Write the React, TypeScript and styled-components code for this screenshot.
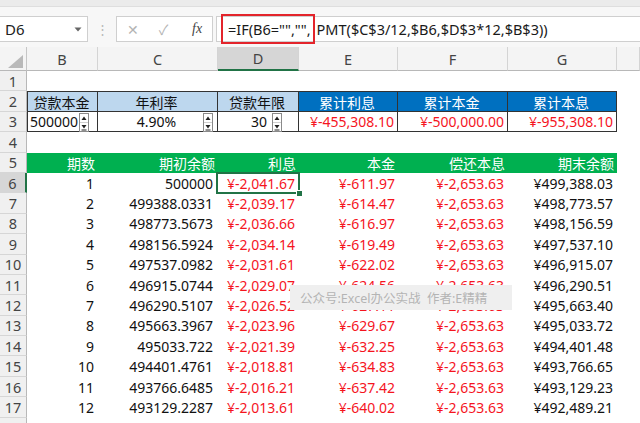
import React from "react";
import styled, { createGlobalStyle, css } from "styled-components";

const GlobalStyle = createGlobalStyle`
  html, body { margin: 0; padding: 0; background: #fff; }
  body { font-family: "Noto Sans", "Noto Sans CJK SC", sans-serif; }
`;

const ROW_H = 20.4;
const COLS = "27px 71px 120px 81px 99px 110px 109px 1fr";
const RED = "#f5141e";
const GREEN = "#00b050";
const BLUE = "#0070c0";
const PALE = "#bdd7ee";
const LINE = "#333";

type Align = "left" | "center" | "right";

const Window = styled.div`
  width: 640px;
  height: 423px;
  overflow: hidden;
  display: flex;
  flex-direction: column;
  background: #fff;
`;

const RibbonEdge = styled.div`
  height: 6px;
  flex-shrink: 0;
  background: #ebebeb;
  border-bottom: 1px solid #dedede;
`;

const FormulaBar = styled.div`
  height: 40px;
  flex-shrink: 0;
  box-sizing: border-box;
  padding: 9px 0 5px 0;
  display: flex;
  align-items: stretch;
  background: #f7f7f7;
`;

const NameBox = styled.div`
  width: 88px;
  box-sizing: border-box;
  background: #fff;
  border: 1px solid #cfcfcf;
  border-left: none;
  display: flex;
  align-items: center;
  justify-content: space-between;
  padding: 0 5px 0 5px;
  font-size: 15px;
  color: #222;
`;

const Grip = styled.div`
  width: 28px;
  display: flex;
  align-items: center;
  justify-content: center;
  color: #b8b8b8;
  font-size: 13px;
`;

const FxBox = styled.div`
  width: 97px;
  box-sizing: border-box;
  background: #fff;
  border: 1px solid #cfcfcf;
  display: flex;
  align-items: center;
  padding-left: 4px;
`;

const FxIcon = styled.span<{ $w: number; $italic?: boolean; $dark?: boolean }>`
  width: ${(p) => p.$w}px;
  display: flex;
  justify-content: center;
  color: ${(p) => (p.$dark ? "#444" : "#b4b4b4")};
  font-size: 14px;
  ${(p) =>
    p.$italic &&
    css`
      font-family: "Liberation Serif", serif;
      font-style: italic;
    `}
`;

const FormulaInput = styled.div`
  flex: 1;
  margin-left: 3px;
  box-sizing: border-box;
  background: #fff;
  border: 1px solid #cfcfcf;
  border-right: none;
  display: flex;
  align-items: center;
  padding-left: 4px;
  font-size: 14.5px;
  color: #1a1a1a;
  white-space: nowrap;
`;

const Highlight = styled.span`
  height: 30px;
  box-sizing: border-box;
  border: 2px solid #e3242b;
  display: inline-flex;
  align-items: center;
  padding: 0 2px 0 5px;
  margin-right: 2px;
`;

const Sheet = styled.div`
  position: relative;
  flex: 1;
  display: grid;
  grid-template-columns: ${COLS};
  grid-template-rows: 24px repeat(18, ${ROW_H}px);
  font-size: 14px;
  color: #111;
`;

const Corner = styled.div`
  background: #f4f4f4;
  border-right: 1px solid #c6c6c6;
  border-bottom: 1px solid #b8b8b8;
  display: flex;
  align-items: flex-end;
  justify-content: flex-end;
  padding: 0 3px 2px 0;
`;

const ColHead = styled.div<{ $active?: boolean }>`
  box-sizing: border-box;
  background: ${(p) => (p.$active ? "#d6d6d6" : "#f4f4f4")};
  border-right: 1px solid #d4d4d4;
  border-bottom: ${(p) => (p.$active ? "2px solid #217346" : "1px solid #b8b8b8")};
  display: flex;
  align-items: center;
  justify-content: center;
  color: #444;
  font-size: 14.5px;
`;

const RowHead = styled.div<{ $active?: boolean }>`
  box-sizing: border-box;
  background: ${(p) => (p.$active ? "#d6d6d6" : "#f0f0f0")};
  border-right: ${(p) => (p.$active ? "2px solid #217346" : "1px solid #b8b8b8")};
  border-bottom: 1px solid #d6d6d6;
  display: flex;
  align-items: center;
  justify-content: center;
  color: #444;
  font-size: 14.5px;
`;

const Cell = styled.div<{
  $align?: Align;
  $bg?: string;
  $color?: string;
  $boxed?: boolean;
  $top?: boolean;
  $left?: boolean;
  $pad?: number;
  $selected?: boolean;
}>`
  position: relative;
  box-sizing: border-box;
  display: flex;
  align-items: center;
  white-space: nowrap;
  justify-content: ${(p) =>
    p.$align === "left" ? "flex-start" : p.$align === "center" ? "center" : "flex-end"};
  padding: 0 ${(p) => p.$pad ?? 4}px 0 2px;
  background: ${(p) => p.$bg ?? "transparent"};
  color: ${(p) => p.$color ?? "#111"};
  ${(p) =>
    p.$boxed &&
    css`
      border-right: 1px solid ${LINE};
      border-bottom: 1px solid ${LINE};
    `}
  ${(p) => p.$top && css`border-top: 1px solid ${LINE};`}
  ${(p) => p.$left && css`border-left: 1px solid ${LINE};`}
  ${(p) =>
    p.$selected &&
    css`
      z-index: 2;
      &::before {
        content: "";
        position: absolute;
        inset: -1px -1px -1px -2px;
        border: 2px solid #217346;
      }
      &::after {
        content: "";
        position: absolute;
        right: -4px;
        bottom: -4px;
        width: 5px;
        height: 5px;
        background: #217346;
        border: 1px solid #fff;
      }
    `}
`;

const SpinBox = styled.span<{ $right: number }>`
  position: absolute;
  right: ${(p) => p.$right}px;
  top: 1px;
  display: flex;
`;

const Watermark = styled.div`
  position: absolute;
  left: 290px;
  top: 238px;
  width: 222px;
  height: 25px;
  box-sizing: border-box;
  padding-left: 10px;
  background: #efefef;
  color: #b4b4b4;
  font-size: 12.5px;
  display: flex;
  align-items: center;
  white-space: pre;
  z-index: 3;
`;

function Spinner({ right }: { right: number }) {
  return (
    <SpinBox $right={right}>
      <svg width="10" height="19" viewBox="0 0 10 19">
        <rect x="0.5" y="0.5" width="9" height="18" fill="#fff" stroke="#8a8a8a" />
        <line x1="1" y1="9.5" x2="9" y2="9.5" stroke="#d0d0d0" />
        <path d="M5 3.5 L7.5 7 H2.5Z" fill="#222" />
        <path d="M2.5 12 H7.5 L5 15.5Z" fill="#222" />
        <line x1="2.5" y1="17" x2="7.5" y2="17" stroke="#222" />
      </svg>
    </SpinBox>
  );
}

const letters = ["B", "C", "D", "E", "F", "G", ""];

const schedule: [number, string, string, string, string, string][] = [
  [1, "500000", "¥-2,041.67", "¥-611.97", "¥-2,653.63", "¥499,388.03"],
  [2, "499388.0331", "¥-2,039.17", "¥-614.47", "¥-2,653.63", "¥498,773.57"],
  [3, "498773.5673", "¥-2,036.66", "¥-616.97", "¥-2,653.63", "¥498,156.59"],
  [4, "498156.5924", "¥-2,034.14", "¥-619.49", "¥-2,653.63", "¥497,537.10"],
  [5, "497537.0982", "¥-2,031.61", "¥-622.02", "¥-2,653.63", "¥496,915.07"],
  [6, "496915.0744", "¥-2,029.07", "¥-624.56", "¥-2,653.63", "¥496,290.51"],
  [7, "496290.5107", "¥-2,026.52", "¥-627.11", "¥-2,653.63", "¥495,663.40"],
  [8, "495663.3967", "¥-2,023.96", "¥-629.67", "¥-2,653.63", "¥495,033.72"],
  [9, "495033.722", "¥-2,021.39", "¥-632.25", "¥-2,653.63", "¥494,401.48"],
  [10, "494401.4761", "¥-2,018.81", "¥-634.83", "¥-2,653.63", "¥493,766.65"],
  [11, "493766.6485", "¥-2,016.21", "¥-637.42", "¥-2,653.63", "¥493,129.23"],
  [12, "493129.2287", "¥-2,013.61", "¥-640.02", "¥-2,653.63", "¥492,489.21"],
];

const EmptyRow = ({ n }: { n: number }) => (
  <>
    <RowHead>{n}</RowHead>
    {letters.map((l, i) => (
      <Cell key={i} />
    ))}
  </>
);

export default function App() {
  return (
    <Window>
      <GlobalStyle />
      <RibbonEdge />
      <FormulaBar>
        <NameBox>
          <span>D6</span>
          <svg width="8" height="5" viewBox="0 0 8 5">
            <path d="M0.5 0.5 H7.5 L4 4.5Z" fill="#666" />
          </svg>
        </NameBox>
        <Grip>⋮</Grip>
        <FxBox>
          <FxIcon $w={24}>✕</FxIcon>
          <FxIcon $w={38}>✓</FxIcon>
          <FxIcon $w={30} $italic $dark>
            fx
          </FxIcon>
        </FxBox>
        <FormulaInput>
          <Highlight>=IF(B6="","",</Highlight>
          PMT($C$3/12,$B6,$D$3*12,$B$3))
        </FormulaInput>
      </FormulaBar>

      <Sheet>
        <Corner>
          <svg width="15" height="13" viewBox="0 0 15 13">
            <path d="M15 0 V13 H0Z" fill="#b9b9b9" />
          </svg>
        </Corner>
        {letters.map((l, i) => (
          <ColHead key={i} $active={l === "D"}>
            {l}
          </ColHead>
        ))}

        <EmptyRow n={1} />

        <RowHead>2</RowHead>
        <Cell $align="center" $bg={PALE} $boxed $top $left>贷款本金</Cell>
        <Cell $align="center" $bg={PALE} $boxed $top>年利率</Cell>
        <Cell $align="center" $bg={PALE} $boxed $top>贷款年限</Cell>
        <Cell $align="center" $bg={BLUE} $color="#fff" $boxed $top>累计利息</Cell>
        <Cell $align="center" $bg={BLUE} $color="#fff" $boxed $top>累计本金</Cell>
        <Cell $align="center" $bg={BLUE} $color="#fff" $boxed $top>累计本息</Cell>
        <Cell />

        <RowHead>3</RowHead>
        <Cell $align="left" $boxed $left>
          500000
          <Spinner right={8} />
        </Cell>
        <Cell $align="center" $boxed>
          4.90%
          <Spinner right={4} />
        </Cell>
        <Cell $boxed $pad={31}>
          30
          <Spinner right={16} />
        </Cell>
        <Cell $color={RED} $boxed $pad={3}>¥-455,308.10</Cell>
        <Cell $color={RED} $boxed $pad={3}>¥-500,000.00</Cell>
        <Cell $color={RED} $boxed $pad={3}>¥-955,308.10</Cell>
        <Cell />

        <EmptyRow n={4} />

        <RowHead>5</RowHead>
        {["期数", "期初余额", "利息", "本金", "偿还本息", "期末余额"].map((t) => (
          <Cell key={t} $bg={GREEN} $color="#fff" $pad={3}>
            {t}
          </Cell>
        ))}
        <Cell />

        {schedule.map(([n, open, interest, principal, pay, close], i) => (
          <React.Fragment key={n}>
            <RowHead $active={i === 0}>{i + 6}</RowHead>
            <Cell>{n}</Cell>
            <Cell $pad={5}>{open}</Cell>
            <Cell $color={RED} $selected={i === 0}>
              {interest}
            </Cell>
            <Cell $color={RED} $pad={3}>{principal}</Cell>
            <Cell $color={RED}>{pay}</Cell>
            <Cell>{close}</Cell>
            <Cell />
          </React.Fragment>
        ))}

        <EmptyRow n={18} />

        <Watermark>公众号:Excel办公实战  作者:E精精</Watermark>
      </Sheet>
    </Window>
  );
}
